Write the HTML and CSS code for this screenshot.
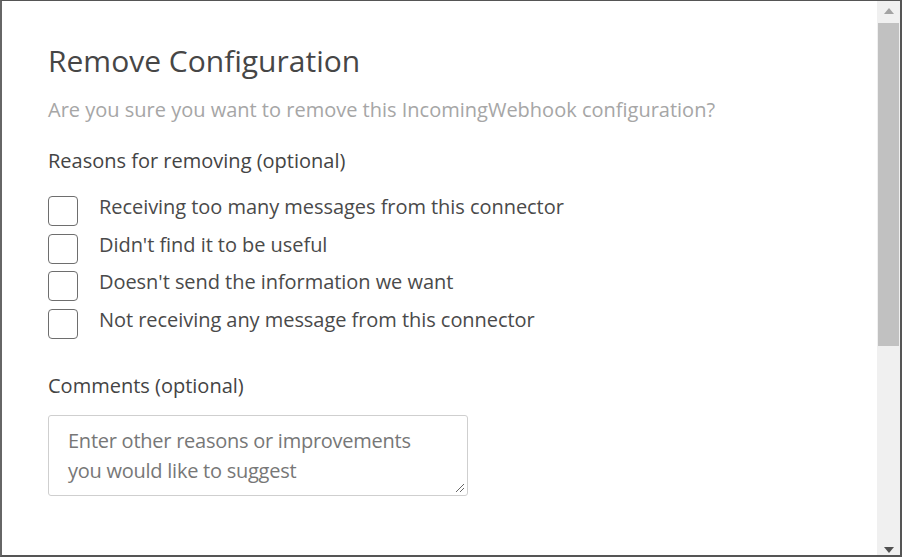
FILE: index.html
```html
<!DOCTYPE html>
<html>
<head>
<meta charset="utf-8">
<link rel="stylesheet" href="styles.css">
</head>
<body>
<div class="frame">
  <div class="content">
    <h1 class="title">Remove Configuration</h1>
    <p class="subtitle">Are you sure you want to remove this IncomingWebhook configuration?</p>
    <p class="label">Reasons for removing (optional)</p>
    <ul class="reasons">
      <li class="reason"><span class="box"></span><span class="reason-text">Receiving too many messages from this connector</span></li>
      <li class="reason"><span class="box"></span><span class="reason-text">Didn't find it to be useful</span></li>
      <li class="reason"><span class="box"></span><span class="reason-text">Doesn't send the information we want</span></li>
      <li class="reason"><span class="box"></span><span class="reason-text">Not receiving any message from this connector</span></li>
    </ul>
    <p class="label comments-label">Comments (optional)</p>
    <div class="textarea">
      <span class="placeholder">Enter other reasons or improvements you would like to suggest</span>
      <svg class="grip" width="12" height="12" viewBox="0 0 12 12"><path d="M11 3 L3 11 M11 7 L7 11" stroke="#666" stroke-width="1" fill="none"/></svg>
    </div>
  </div>
  <div class="scrollbar">
    <div class="arrow up"></div>
    <div class="track"><div class="thumb"></div></div>
    <div class="arrow down"></div>
  </div>
</div>
</body>
</html>
```
FILE: styles.css
```css
html, body {
  margin: 0;
  padding: 0;
  background: #fff;
}
.frame {
  width: 902px;
  height: 557px;
  box-sizing: border-box;
  border-top: 1px solid #555;
  border-left: 2px solid #666;
  border-right: 2px solid #555;
  border-bottom: 2px solid #555;
  display: flex;
  overflow: hidden;
  font-family: "Open Sans", "Noto Sans", sans-serif;
}
.content {
  flex: 1;
  padding-left: 46px;
  padding-top: 38px;
}
.title {
  margin: 0;
  font-size: 30px;
  line-height: 44px;
  font-weight: 400;
  color: #464646;
}
.subtitle {
  margin: 12px 0 0;
  font-size: 20px;
  line-height: 30px;
  color: #a6a6a6;
}
.label {
  margin: 21px 0 0;
  font-size: 20px;
  line-height: 30px;
  color: #444;
}
.reasons {
  list-style: none;
  margin: 20px 0 0;
  padding: 0;
  display: flex;
  flex-direction: column;
  gap: 7.6px;
}
.reason {
  display: flex;
  align-items: center;
  height: 30px;
}
.box {
  width: 30px;
  height: 30px;
  box-sizing: border-box;
  border: 1px solid #6e6e6e;
  border-radius: 4px;
  flex: none;
}
.reason-text {
  margin-left: 21px;
  margin-top: -8px;
  font-size: 20px;
  line-height: 30px;
  color: #4a4a4a;
  letter-spacing: -0.05px;
}
.comments-label {
  margin-top: 32px;
}
.textarea {
  position: relative;
  margin-top: 14px;
  width: 420px;
  height: 81px;
  box-sizing: border-box;
  border: 1px solid #cfcfcf;
  border-radius: 3px;
  padding: 10px 19px;
}
.placeholder {
  display: block;
  font-size: 20px;
  line-height: 30px;
  color: #777;
  letter-spacing: -0.25px;
}
.grip {
  position: absolute;
  right: 2px;
  bottom: 2px;
}
.scrollbar {
  width: 23px;
  flex: none;
  background: #f0f0f0;
  display: flex;
  flex-direction: column;
  align-items: center;
}
.arrow {
  width: 0;
  height: 0;
  border-left: 5.5px solid transparent;
  border-right: 5.5px solid transparent;
}
.arrow.up {
  margin-top: 7px;
  border-bottom: 6px solid #a3a3a3;
}
.arrow.down {
  margin-bottom: 2px;
  border-top: 6px solid #505050;
}
.track {
  flex: 1;
  width: 100%;
  padding-top: 9px;
  box-sizing: border-box;
}
.thumb {
  margin-left: 1px;
  width: 21px;
  height: 323px;
  background: #c1c1c1;
}
```
